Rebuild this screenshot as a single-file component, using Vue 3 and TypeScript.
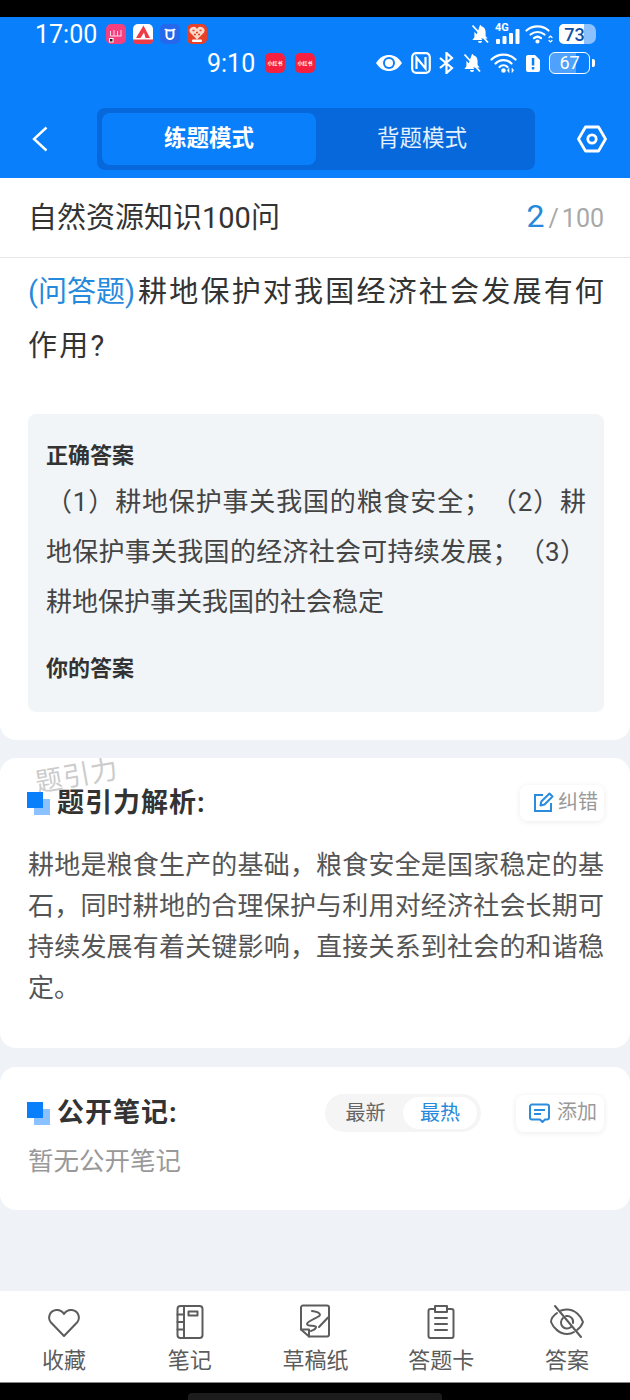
<template>
  <div class="page">
    <div class="notch"></div>

    <header class="header">
      <!-- outer status bar -->
      <div class="status status-one">
        <span class="time">17:00</span>
        <div class="apps">
          <svg width="20" height="20" viewBox="0 0 20 20">
            <rect width="20" height="20" rx="5" fill="#f4407f" />
            <path d="M4.500 7v5M8 6v6M11.500 7v5M15 6v6M4.500 12h11" stroke="#ffd5e4" stroke-width="1" fill="none" />
            <rect x="3" y="14" width="4.500" height="4.500" fill="#fff" />
            <rect x="4" y="15" width="2.500" height="2.500" fill="#222" />
          </svg>
          <svg width="20" height="20" viewBox="0 0 20 20">
            <rect width="20" height="20" rx="5" fill="#fff" />
            <path d="M10.500 1.500 3 14H7.500L11 8.500 12.500 14H17Z" fill="#ee3b46" />
            <path d="M0 15.500H20V16A4 4 0 0 1 16 20H4A4 4 0 0 1 0 16Z" fill="#ee3b46" />
          </svg>
          <svg width="20" height="20" viewBox="0 0 20 20">
            <rect width="20" height="20" rx="5" fill="#2568ec" />
            <path d="M5 5c1 1.500 2 1.500 5 1.500S14 6.500 15 5M6.500 7v4.500a3.500 3.500 0 0 0 7 0V7" stroke="#fff" stroke-width="2" fill="none" />
            <path d="M10 9v3" stroke="#2568ec" stroke-width="1.500" />
          </svg>
          <svg width="20" height="20" viewBox="0 0 20 20">
            <rect width="20" height="20" rx="5" fill="#e8412a" />
            <path d="M10 15.500 3 8.500A3.700 3.700 0 0 1 10 5 A3.700 3.700 0 0 1 17 8.500Z" fill="#fbd9c8" />
            <path d="M5.500 6.500h2M9 8.500h2M12.500 6.500h2M7 10.500h2M11 10.500h2" stroke="#e8412a" stroke-width="1.400" />
            <rect x="5" y="15.500" width="10" height="2.500" rx="1" fill="#fff" />
          </svg>
        </div>
        <div class="status-right one">
          <svg width="20" height="20" viewBox="0 0 20 20" fill="#fff">
            <path d="M10 1a1.400 1.400 0 0 1 1.400 1.300C14 3 15.600 5.200 15.600 8v4l2 2.600H5.400zM3 6.500l9.500 9.500H2.400l2-2.700V8z" />
            <path d="M8 17h4a2 2 0 0 1-4 0Z" />
            <path d="M2.500 1.500 18 18.500" stroke="#fff" stroke-width="1.800" />
          </svg>
          <div class="signal">
            <span class="net">4G</span>
            <svg width="25" height="15" viewBox="0 0 25 15" fill="#fff">
              <rect x="1" y="10" width="4" height="5" rx="1" />
              <rect x="7.500" y="7" width="4" height="8" rx="1" />
              <rect x="14" y="4" width="4" height="11" rx="1" />
              <rect x="20.500" y="0" width="4" height="15" rx="1" />
            </svg>
          </div>
          <svg width="28" height="20" viewBox="0 0 28 20" fill="none" stroke="#fff" stroke-width="2.200" stroke-linecap="round">
            <path d="M1.500 6.500a17 17 0 0 1 22 0" />
            <path d="M5.500 10.500a11 11 0 0 1 14 0" />
            <path d="M9 14.200a5.500 5.500 0 0 1 7 0" />
            <circle cx="12.500" cy="17.500" r="1" fill="#fff" />
            <path d="M24 13.500l1.500-1.500 1.500 1.500M24 16.500l1.500 1.500 1.500-1.500" stroke-width="1.200" />
          </svg>
          <div class="pill-battery"><span class="pill-fill"></span><span class="pill-num">73</span></div>
        </div>
      </div>

      <!-- inner status bar -->
      <div class="status status-two">
        <span class="time">9:10</span>
        <div class="apps wide">
          <span class="red-app">小红书</span>
          <span class="red-app">小红书</span>
        </div>
        <div class="status-right two">
          <svg width="28" height="20" viewBox="0 0 28 20">
            <path d="M1 10C5 4 9 2 14 2s9 2 13 8c-4 6-8 8-13 8S5 16 1 10Z" fill="#fff" />
            <circle cx="14" cy="10" r="6" fill="#0a7ffb" />
            <circle cx="14" cy="10" r="4" fill="#fff" />
          </svg>
          <svg width="20" height="22" viewBox="0 0 20 22" fill="none" stroke="#fff">
            <rect x="1.200" y="1.200" width="17.600" height="19.600" rx="4" stroke-width="2.200" />
            <path d="M5.500 17V5.500l9 11V5" stroke-width="2.200" />
          </svg>
          <svg width="15" height="22" viewBox="0 0 15 22" fill="none" stroke="#fff" stroke-width="2.200">
            <path d="M1 6l12 10-5.500 5V1L13 6 1 16" />
          </svg>
          <svg width="20" height="20" viewBox="0 0 20 20" fill="#fff">
            <path d="M10 1a1.400 1.400 0 0 1 1.400 1.300C14 3 15.600 5.200 15.600 8v4l2 2.600H5.400zM3 6.500l9.500 9.500H2.400l2-2.700V8z" />
            <path d="M8 17h4a2 2 0 0 1-4 0Z" />
            <path d="M2.500 1.500 18 18.500" stroke="#fff" stroke-width="1.800" />
          </svg>
          <svg width="27" height="20" viewBox="0 0 27 20" fill="none" stroke="#fff" stroke-width="2.200" stroke-linecap="round">
            <path d="M1.500 6.500a17 17 0 0 1 24 0" />
            <path d="M5.500 10.500a11 11 0 0 1 16 0" />
            <path d="M9.500 14a5.500 5.500 0 0 1 8 0" />
            <circle cx="13.500" cy="17.500" r="1.200" fill="#fff" />
            <path d="M19 15.500v4l-1.500-2zM22 15.500v4l1.500-2z" fill="#fff" stroke-width="0.600" />
          </svg>
          <svg width="16" height="20" viewBox="0 0 16 20">
            <path d="M3 2h7l5 5v10a2 2 0 0 1-2 2H3a2 2 0 0 1-2-2V4a2 2 0 0 1 2-2Z" fill="#fff" />
            <rect x="6.800" y="5" width="2.500" height="7.500" fill="#0a7ffb" />
            <rect x="6.800" y="14" width="2.500" height="2.500" fill="#0a7ffb" />
          </svg>
          <div class="line-battery"><span class="line-box">67</span><span class="line-tip"></span></div>
        </div>
      </div>

      <div class="toolbar">
        <button class="icon-btn" aria-label="back">
          <svg width="16" height="26" viewBox="0 0 16 26" fill="none" stroke="#fff" stroke-width="2.400">
            <path d="M14.500 1.500 2 13l12.500 11.500" />
          </svg>
        </button>
        <div class="mode-tabs">
          <span class="mode-tab active">练题模式</span>
          <span class="mode-tab">背题模式</span>
        </div>
        <button class="icon-btn" aria-label="settings">
          <svg width="30" height="28" viewBox="0 0 30 28" fill="none" stroke="#fff" stroke-width="2.800" stroke-linejoin="round">
            <path d="M8.500 2h13L28.500 14l-7 12h-13L1.500 14Z" />
            <circle cx="15" cy="14" r="4.200" />
          </svg>
        </button>
      </div>
    </header>

    <main class="content">
      <section class="card question-card">
        <div class="title-row">
          <span class="paper-title">自然资源知识100问</span>
          <span class="progress"><b>2</b><i>/</i>100</span>
        </div>
        <div class="question"><span class="q-type">(问答题)</span><span>耕地保护对我国经济社会发展有何</span><span>作用?</span></div>
        <div class="answer-box">
          <div class="answer-label">正确答案</div>
          <div class="answer-text">（1）耕地保护事关我国的粮食安全；（2）耕地保护事关我国的经济社会可持续发展；（3）耕地保护事关我国的社会稳定</div>
          <div class="answer-label mine">你的答案</div>
        </div>
      </section>

      <section class="card analysis-card">
        <span class="watermark">题引力</span>
        <div class="card-head">
          <div class="head-title">
            <svg class="squares" width="24" height="24" viewBox="0 0 24 24">
              <rect x="7" y="7" width="16" height="16" fill="#8cc1ff" />
              <rect width="16" height="16" fill="#0a7ffb" />
            </svg>
            <h2>题引力解析:</h2>
          </div>
          <button class="small-btn">
            <svg width="21" height="21" viewBox="0 0 21 21" fill="none" stroke="#2b8bdc" stroke-width="2">
              <path d="M10 3H2v16h16v-8" />
              <path d="M7.500 13.500l.8-4L16.500 1.500l3 3-8 8Z" stroke-linejoin="round" />
            </svg>
            纠错
          </button>
        </div>
        <p class="analysis">耕地是粮食生产的基础，粮食安全是国家稳定的基石，同时耕地的合理保护与利用对经济社会长期可持续发展有着关键影响，直接关系到社会的和谐稳定。</p>
      </section>

      <section class="card notes-card">
        <div class="card-head notes-head">
          <div class="head-title">
            <svg class="squares" width="24" height="24" viewBox="0 0 24 24">
              <rect x="7" y="7" width="16" height="16" fill="#8cc1ff" />
              <rect width="16" height="16" fill="#0a7ffb" />
            </svg>
            <h2>公开笔记:</h2>
          </div>
          <div class="notes-tools">
            <div class="sort-tabs">
              <span class="sort-tab">最新</span>
              <span class="sort-tab on">最热</span>
            </div>
            <button class="small-btn add">
              <svg width="23" height="22" viewBox="0 0 23 22" fill="none" stroke="#2b8bdc" stroke-width="2">
                <path d="M4 2.500h15a2 2 0 0 1 2 2v11a2 2 0 0 1-2 2h-2l-2.500 2.500-2.500-2.500H4a2 2 0 0 1-2-2v-11a2 2 0 0 1 2-2Z" stroke-linejoin="round" />
                <path d="M6 8h11M6 12h7" />
              </svg>
              添加
            </button>
          </div>
        </div>
        <p class="no-notes">暂无公开笔记</p>
      </section>
    </main>

    <nav class="bottom-nav">
      <div v-for="item in navItems" :key="item.label" class="nav-item">
        <svg width="36" height="36" viewBox="0 0 36 36" fill="none" stroke="#5c5c5c" stroke-width="2" stroke-linecap="round" stroke-linejoin="round">
          <path v-for="(d, i) in item.paths" :key="i" :d="d" />
        </svg>
        <span>{{ item.label }}</span>
      </div>
    </nav>

    <div class="home-bar"><span></span></div>
  </div>
</template>

<script setup lang="ts">
  interface NavItem {
    label: string;
    paths: string[];
  }

  // Bottom toolbar entries
  const navItems: NavItem[] = [
    {
      label: '收藏',
      paths: ['M18 32 5 18.500C1.500 14.500 3 7 10 6c3.500-.4 6.500 1.500 8 4 1.500-2.500 4.500-4.400 8-4 7 1 8.500 8.500 5 12.500Z'],
    },
    {
      label: '笔记',
      paths: [
        'M8.500 2h19a3 3 0 0 1 3 3v26a3 3 0 0 1-3 3h-19a3 3 0 0 1-3-3V5a3 3 0 0 1 3-3Z',
        'M12 2v32',
        'M5.500 10.500H12M5.500 18H12M5.500 25.500H12',
        'M16.500 7.500h9v4h-9Z',
      ],
    },
    {
      label: '草稿纸',
      paths: [
        'M6 1.500h24a2 2 0 0 1 2 2v27a2 2 0 0 1-2 2H12L4 25.500V3.500a2 2 0 0 1 2-2Z',
        'M4 25.500h8v7',
        'M15 7c4 .5 8 2 8 4s-13 6-13 9 9 .5 9 3-3 3-5 4',
        'M22 23l9-9.500',
      ],
    },
    {
      label: '答题卡',
      paths: [
        'M11 5H7.500a2 2 0 0 0-2 2v25a2 2 0 0 0 2 2h21a2 2 0 0 0 2-2V7a2 2 0 0 0-2-2H25',
        'M12 2h12v6H12Z',
        'M12 14h12M12 20h12M12 26h12',
      ],
    },
    {
      label: '答案',
      paths: [
        'M8 9C3.500 12 2 16 2 18c2 5 8 12 16 12 3 0 5-.6 7-2',
        'M12 6.500c2-.6 4-1 6-1 8 0 14 6.500 16 12.500-1 3-3 6-6 8',
        'M14 14a6 6 0 0 0 8 9M17 12a6 6 0 0 1 7 7',
        'M6 2l26 31',
      ],
    },
  ];
</script>

<style>
  html,
  body {
    margin: 0;
    background: #000;
  }
</style>

<style scoped>
  * {
    box-sizing: border-box;
  }

  .page {
    width: 630px;
    height: 1400px;
    display: flex;
    flex-direction: column;
    background: #eff3f7;
    font-family: Roboto, 'Noto Sans CJK SC', sans-serif;
    overflow: hidden;
  }

  .notch {
    height: 17px;
    background: #000;
  }

  .header {
    height: 161px;
    background: #0a7ffb;
    color: #fff;
    padding-top: 7px;
  }

  .status {
    display: flex;
    align-items: center;
    height: 20px;
  }

  .status-one {
    padding: 0 35px;
  }

  .status-two {
    margin-top: 9px;
    padding-left: 207px;
  }

  .time {
    font-size: 25px;
    line-height: 20px;
    width: 60px;
    padding-top: 2px;
    white-space: nowrap;
  }

  .status-two .time {
    width: 50px;
  }

  .apps {
    display: flex;
    gap: 7px;
    margin-left: 11px;
  }

  .apps.wide {
    gap: 10px;
    margin-left: 8px;
  }

  .red-app {
    width: 20px;
    height: 20px;
    border-radius: 5px;
    background: #f5203f;
    color: #fff;
    font-size: 5px;
    font-weight: 700;
    line-height: 20px;
    text-align: center;
    white-space: nowrap;
  }

  .status-right {
    display: flex;
    align-items: center;
    position: absolute;
  }

  .status-right.one {
    left: 470px;
    gap: 5px;
  }

  .status-right.two {
    left: 375px;
    gap: 8px;
  }

  .signal {
    position: relative;
    width: 25px;
    height: 20px;
    display: flex;
    align-items: flex-end;
  }

  .net {
    position: absolute;
    top: -2px;
    left: 0;
    font-size: 11px;
    font-weight: 700;
    line-height: 11px;
  }

  .pill-battery {
    position: relative;
    width: 37px;
    height: 20px;
    border-radius: 5px 7px 7px 5px;
    overflow: hidden;
    background: #8cc1ff;
    margin-left: 1px;
  }

  .pill-fill {
    position: absolute;
    left: 0;
    top: 0;
    bottom: 0;
    width: 25px;
    background: #fff;
  }

  .pill-num {
    position: absolute;
    inset: 0;
    padding-right: 6px;
    color: #0c4fa5;
    font-size: 18px;
    font-weight: 500;
    line-height: 21px;
    text-align: center;
  }

  .line-battery {
    display: flex;
    align-items: center;
    gap: 2px;
  }

  .line-box {
    width: 41px;
    height: 22px;
    border: 1.500px solid #fff;
    border-radius: 6px;
    background: linear-gradient(to right, #4fa1fc 67%, transparent 67%);
    font-size: 18px;
    line-height: 19px;
    text-align: center;
  }

  .line-tip {
    width: 3px;
    height: 8px;
    border-radius: 0 2px 2px 0;
    background: #fff;
  }

  .toolbar {
    display: flex;
    align-items: center;
    margin-top: 35px;
    padding: 0 23px 0 32px;
  }

  .icon-btn {
    display: flex;
    padding: 0;
    border: 0;
    background: none;
  }

  .mode-tabs {
    display: flex;
    width: 438px;
    height: 62px;
    margin: 0 42px 0 49px;
    padding: 5px;
    border-radius: 8px;
    background: #0668da;
  }

  .mode-tab {
    width: 214px;
    border-radius: 8px;
    font-size: 22.500px;
    line-height: 50px;
    text-align: center;
    color: #e3f0ff;
  }

  .mode-tab + .mode-tab {
    flex: 1;
    padding-right: 2px;
  }

  .mode-tab.active {
    background: #0a7ffb;
    color: #fff;
    font-weight: 700;
  }

  .content {
    flex: 1;
    display: flex;
    flex-direction: column;
    gap: 19px;
  }

  .card {
    position: relative;
    background: #fff;
    border-radius: 16px;
  }

  .question-card {
    border-radius: 0 0 16px 16px;
    padding-bottom: 28px;
    margin-bottom: -1px;
  }

  .title-row {
    display: flex;
    align-items: center;
    justify-content: space-between;
    height: 80px;
    padding: 0 26px 5px 28px;
    border-bottom: 1px solid #e6e6e6;
  }

  .paper-title {
    font-size: 29px;
    color: #333;
  }

  .progress {
    display: flex;
    align-items: baseline;
    padding-top: 2px;
    font-size: 25px;
    color: #a8a8a8;
  }

  .progress b {
    font-size: 32px;
    font-weight: 400;
    color: #2589dc;
  }

  .progress i {
    margin: 0 3px 0 4px;
    font-style: normal;
  }

  .question {
    margin: 7px 20px 41px 28px;
    font-size: 29px;
    line-height: 54px;
    letter-spacing: 2.200px;
    color: #333;
  }

  .q-type {
    letter-spacing: 0;
    margin-right: 3px;
    color: #2589dc;
  }

  .answer-box {
    margin: 0 26px 0 28px;
    padding: 27px 18px 28px;
    border-radius: 8px;
    background: #f1f5f8;
  }

  .answer-label {
    font-size: 22px;
    font-weight: 700;
    line-height: 30px;
    color: #333;
  }

  .answer-label.mine {
    margin-top: 27px;
  }

  .answer-text {
    margin-top: 6px;
    font-size: 26px;
    line-height: 50px;
    color: #444;
    text-align: justify;
    text-spacing-trim: space-all;
  }

  .card-head {
    display: flex;
    align-items: center;
    justify-content: space-between;
    height: 36px;
  }

  .head-title {
    display: flex;
    align-items: center;
  }

  .head-title h2 {
    margin: 0;
    padding-bottom: 6px;
    font-size: 27px;
    font-weight: 700;
    letter-spacing: 1px;
    color: #333;
  }

  .squares {
    margin: 0 6px 0 -1px;
    position: relative;
    top: 1px;
  }

  .small-btn {
    display: flex;
    align-items: center;
    gap: 4px;
    width: 84px;
    height: 36px;
    padding: 0 0 5px 13px;
    border: 0;
    border-radius: 8px;
    background: #fff;
    box-shadow: 0 1px 6px rgba(0, 0, 0, 0.08);
    color: #999;
    font-family: inherit;
    font-size: 20px;
  }

  .small-btn svg {
    position: relative;
    top: 2px;
  }

  .analysis-card {
    height: 290px;
    padding: 27px 26px 0 28px;
  }

  .watermark {
    position: absolute;
    left: 35px;
    top: 3px;
    font-size: 27px;
    letter-spacing: 1px;
    line-height: 30px;
    color: #cccccc;
    transform: rotate(-10deg);
  }

  .analysis {
    margin: 24px 0 0;
    font-size: 26px;
    line-height: 41px;
    color: #555;
    text-align: justify;
    text-spacing-trim: space-all;
  }

  .notes-card {
    height: 143px;
    padding: 27px 26px 0 28px;
  }

  .notes-head {
    height: 38px;
  }

  .notes-tools {
    display: flex;
    align-items: center;
    gap: 35px;
  }

  .sort-tabs {
    display: flex;
    width: 156px;
    height: 38px;
    padding: 3px 4px 3px 0;
    border-radius: 19px;
    background: #f5f5f5;
  }

  .sort-tab {
    width: 78px;
    padding-left: 3px;
    font-size: 20px;
    line-height: 32px;
    text-align: center;
    color: #666;
  }

  .sort-tab.on {
    width: 74px;
    padding-left: 0;
    border-radius: 16px;
    background: #fff;
    color: #2589dc;
  }

  .add {
    width: 88px;
    height: 37px;
    gap: 6px;
    padding-left: 12px;
  }

  .no-notes {
    margin: 11px 0 0;
    font-size: 25.500px;
    line-height: 36px;
    color: #999;
  }

  .bottom-nav {
    display: grid;
    grid-template-columns: repeat(5, 1fr);
    height: 92px;
    padding: 13px 0 0 1px;
    background: #fff;
    border-bottom: 1px solid #888;
  }

  .nav-item {
    display: flex;
    flex-direction: column;
    align-items: center;
    gap: 6px;
    font-size: 22px;
    line-height: 30px;
    color: #5c5c5c;
  }

  .home-bar {
    display: flex;
    justify-content: center;
    height: 17px;
    padding-top: 10px;
    background: #000;
  }

  .home-bar span {
    width: 254px;
    height: 7px;
    border-radius: 4px 4px 0 0;
    background: #1c1c1c;
  }
</style>
